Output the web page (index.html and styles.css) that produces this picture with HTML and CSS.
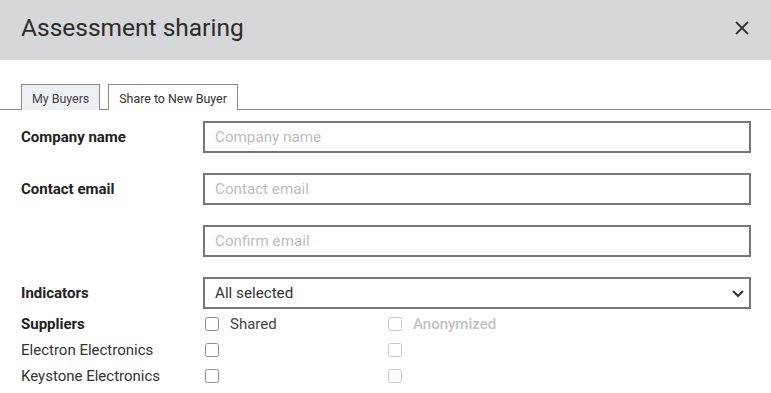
FILE: index.html
```html
<!DOCTYPE html>
<html lang="en">
<head>
  <meta charset="UTF-8" />
  <meta name="viewport" content="width=device-width, initial-scale=1.0"/>
  <title>Assessment sharing</title>
  <link rel="stylesheet" href="styles.css">
</head>
<body>

<header class="modal-header">
  <h1>Assessment sharing</h1>
  <button class="close" aria-label="Close">
    <svg width="16" height="16" viewBox="0 0 16 16"><path d="M2 2L14 14M14 2L2 14" stroke="#333" stroke-width="1.8" fill="none"/></svg>
  </button>
</header>

<div class="tabs">
  <div class="tab">My Buyers</div>
  <div class="tab active">Share to New Buyer</div>
</div>

<form class="share-form">
  <label class="label" for="company">Company name</label>
  <input class="field" id="company" type="text" placeholder="Company name" />

  <label class="label" for="email">Contact email</label>
  <input class="field" id="email" type="email" placeholder="Contact email" />

  <span></span>
  <input class="field" id="confirm" type="email" placeholder="Confirm email" />

  <span class="label">Indicators</span>
  <div class="field select">
    <span>All selected</span>
    <svg width="14" height="10" viewBox="0 0 14 10"><path d="M2 3L7 8L12 3" stroke="#333" stroke-width="2" fill="none"/></svg>
  </div>
</form>

<div class="suppliers">
  <div class="sup-row">
    <span class="label">Suppliers</span>
    <span class="check-cell"><span class="box"></span>Shared</span>
    <span class="check-cell disabled"><span class="box"></span>Anonymized</span>
  </div>
  <div class="sup-row">
    <span class="name">Electron Electronics</span>
    <span class="check-cell"><span class="box"></span></span>
    <span class="check-cell disabled"><span class="box"></span></span>
  </div>
  <div class="sup-row">
    <span class="name">Keystone Electronics</span>
    <span class="check-cell"><span class="box"></span></span>
    <span class="check-cell disabled"><span class="box"></span></span>
  </div>
</div>

</body>
</html>
```

FILE: styles.css
```css
body {
  font-family: Roboto, "Liberation Sans", sans-serif;
  margin: 0;
  padding: 0;
  background-color: white;
  color: #333;
}

.modal-header {
  background-color: #d6d7d9;
  height: 60px;
  padding: 0 21px 0 21px;
  display: flex;
  justify-content: space-between;
  align-items: center;
}

.modal-header h1 {
  margin: 0;
  font-size: 24.5px;
  font-weight: 400;
  color: #2b2b2b;
  padding-bottom: 5px;
}

.close {
  background: none;
  border: none;
  padding: 0;
  width: 16px;
  height: 16px;
  cursor: pointer;
  margin-bottom: 5px;
}

.tabs {
  margin-top: 24px;
  padding-left: 21px;
  display: flex;
  gap: 8px;
  border-bottom: 1px solid #8a8a8a;
}

.tab {
  height: 26px;
  box-sizing: border-box;
  padding: 0 10px;
  border: 1px solid #8a8a8a;
  border-bottom: none;
  background-color: #eef0f4;
  font-size: 12.4px;
  line-height: 27px;
  color: #444;
  margin-bottom: -1px;
}

.tab.active {
  background-color: white;
  color: #333;
}

.share-form {
  display: grid;
  grid-template-columns: 182px 1fr;
  row-gap: 20px;
  align-items: center;
  padding: 11px 20px 0 21px;
}

.label {
  font-size: 15px;
  font-weight: 700;
  color: #222;
}

.field {
  height: 32px;
  box-sizing: border-box;
  border: 2px solid #767676;
  padding: 0 10px;
  font-family: inherit;
  font-size: 15.2px;
  color: #333;
  outline: none;
  margin: 0;
}

.field::placeholder {
  color: #bdbdbd;
}

.select {
  display: flex;
  justify-content: space-between;
  align-items: center;
  padding-left: 10px;
  padding-right: 4px;
}

.suppliers {
  padding: 2px 20px 0 21px;
}

.sup-row {
  display: grid;
  grid-template-columns: 184px 183px 1fr;
  height: 26px;
  align-items: center;
}

.name {
  font-size: 15px;
  color: #333;
}

.check-cell {
  display: flex;
  align-items: center;
  font-size: 15px;
  color: #444;
}

.box {
  width: 14px;
  height: 14px;
  box-sizing: border-box;
  border: 1.5px solid #8c8c8c;
  border-radius: 2.5px;
  margin-right: 11px;
}

.check-cell.disabled {
  color: #c2c2c2;
  font-weight: 500;
}

.check-cell.disabled .box {
  border-color: #c8c8c8;
}
```
